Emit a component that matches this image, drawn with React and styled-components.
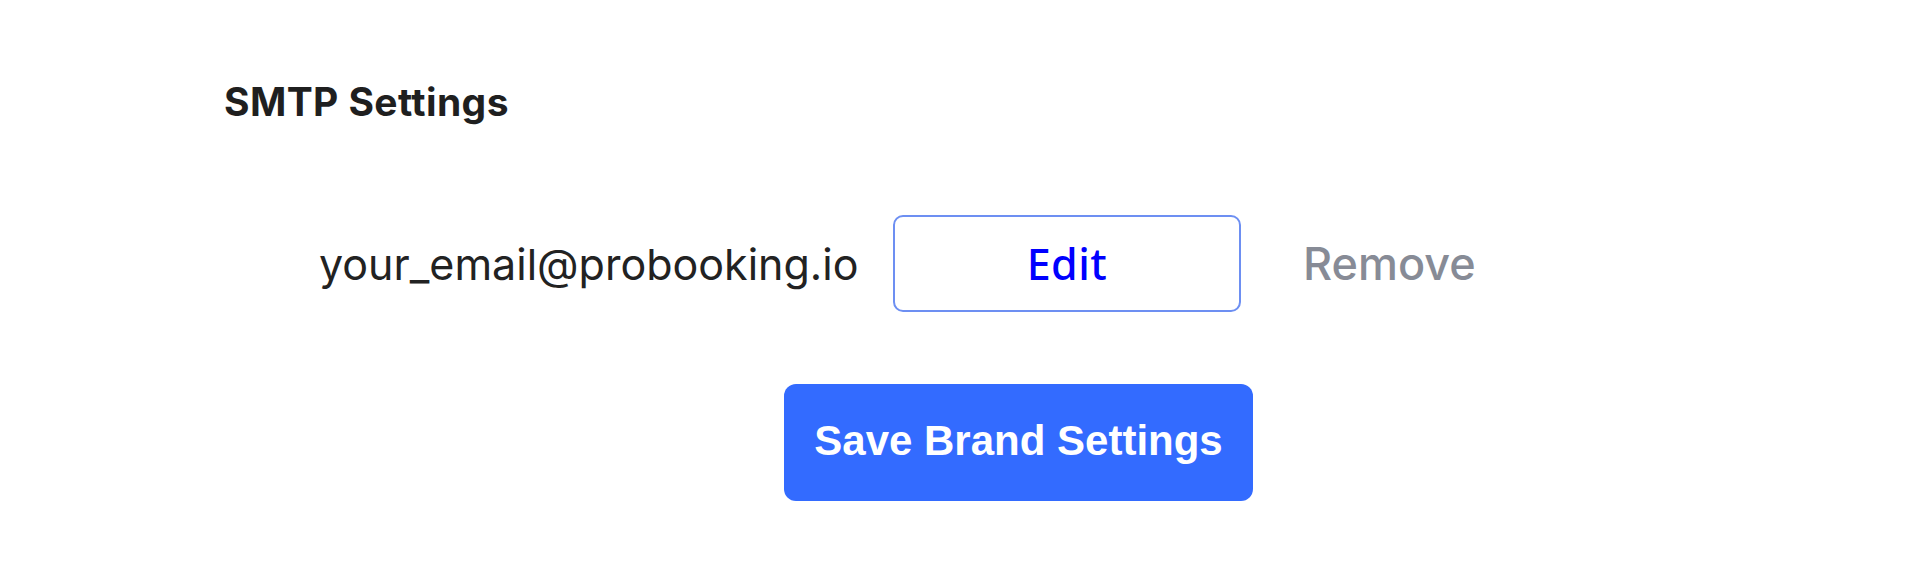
import React from "react";
import styled, { createGlobalStyle } from "styled-components";

const Global = createGlobalStyle`
  html, body { margin: 0; padding: 0; background: #ffffff; }
  body { font-family: Inter, "Noto Sans", sans-serif; }
  * { box-sizing: border-box; }
`;

const Page = styled.div`
  width: 1910px;
  height: 575px;
  padding: 82px 0 0 224px;
  display: flex;
  flex-direction: column;
`;

const Heading = styled.h2`
  margin: 0;
  font-family: Inter, "Noto Sans", sans-serif;
  font-weight: 700;
  font-size: 39px;
  line-height: 1;
  color: #1f1f1f;
  letter-spacing: 0.4px;
`;

const Row = styled.div`
  display: flex;
  align-items: center;
  margin-top: 94px;
  padding-left: 95px;
  height: 97px;
`;

const Email = styled.span`
  font-family: Inter, "Noto Sans", sans-serif;
  font-weight: 400;
  font-size: 43px;
  color: #222222;
  width: 574px;
  white-space: nowrap;
`;

const EditButton = styled.button`
  width: 348px;
  height: 97px;
  border: 2px solid #6d8ff2;
  border-radius: 10px;
  background: #ffffff;
  color: #0000ff;
  font-family: "Noto Sans", "Open Sans", sans-serif;
  font-weight: 500;
  font-size: 43px;
  letter-spacing: 0.5px;
  cursor: pointer;
  padding: 0;
`;

const TextButton = styled.button`
  margin-left: 62px;
  border: none;
  background: none;
  padding: 0;
  font-family: Inter, "Noto Sans", sans-serif;
  font-weight: 500;
  font-size: 45px;
  color: #878b96;
  cursor: pointer;
`;

const SaveRow = styled.div`
  display: flex;
  margin-top: 72px;
  padding-left: 560px;
`;

const SaveButton = styled.button`
  height: 117px;
  width: 469px;
  border: none;
  border-radius: 12px;
  background: #336bff;
  color: #ffffff;
  font-family: "Liberation Sans", Arial, sans-serif;
  font-weight: 700;
  font-size: 42px;
  padding: 0 0 4px;
  cursor: pointer;
`;

export default function App() {
  return (
    <>
      <Global />
      <Page>
        <Heading>SMTP Settings</Heading>
        <Row>
          <Email>your_email@probooking.io</Email>
          <EditButton>Edit</EditButton>
          <TextButton>Remove</TextButton>
        </Row>
        <SaveRow>
          <SaveButton>Save Brand Settings</SaveButton>
        </SaveRow>
      </Page>
    </>
  );
}
